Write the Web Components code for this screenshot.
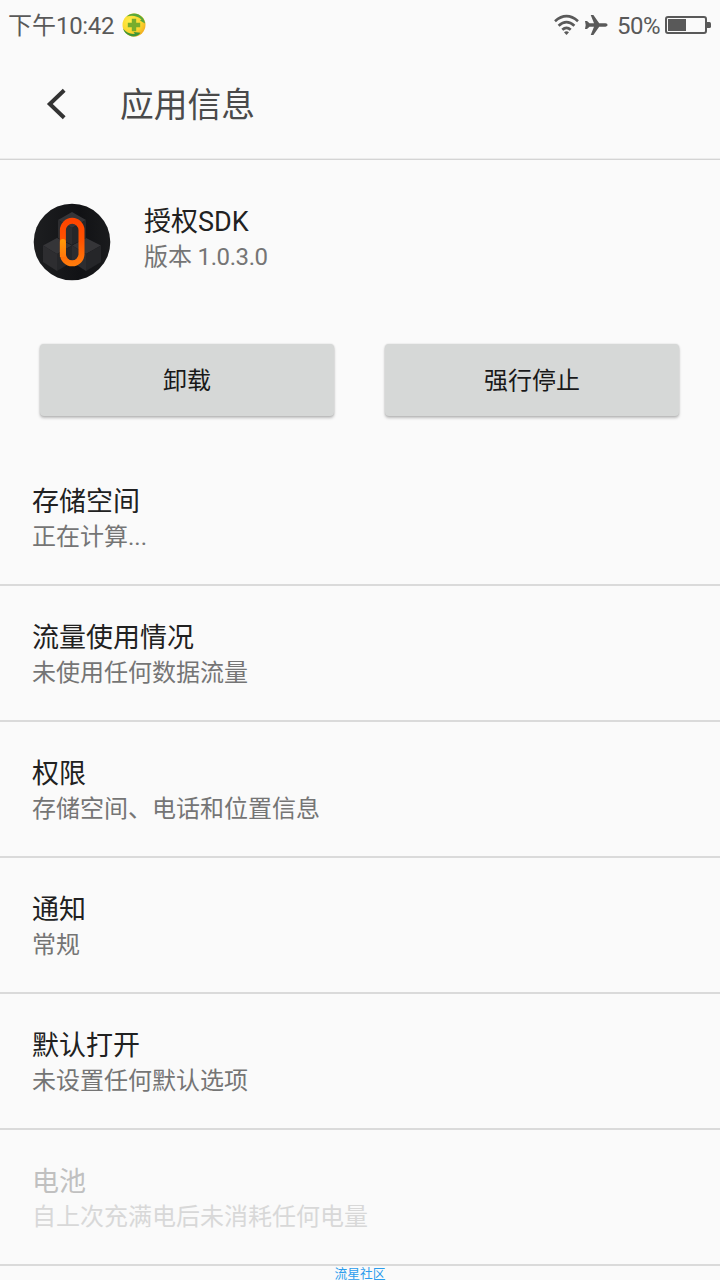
<!DOCTYPE html>
<html lang="zh-CN">
<head>
<meta charset="utf-8">
<title>应用信息</title>
<style>
html,body{margin:0;background:#fafafa}
body{width:720px;height:1280px;overflow:hidden;font-family:Roboto,"Noto Sans CJK SC",sans-serif;color:#212121}
</style>
</head>
<body>
<app-info-page></app-info-page>
<script>
const define = (name, html) => customElements.define(name, class extends HTMLElement {
  constructor() {
    super();
    const t = document.createElement('template');
    t.innerHTML = html;
    this.attachShadow({mode: 'open'}).append(t.content.cloneNode(true));
  }
});

define('status-bar', `
<style>
:host{display:flex;align-items:center;height:50px;box-sizing:border-box;padding:0 9px 0 8px;color:#595959;font-size:24px;line-height:50px}
svg{display:block;flex:none}
.time{width:107px;margin-right:6px;white-space:nowrap;padding-top:2px}
.time span{letter-spacing:-.35px}
.wifi{margin-left:auto}
.plane{margin-left:6px}
.pct{margin:0 6px 0 9px;padding-top:2px;width:42px;white-space:nowrap;letter-spacing:-.5px}
</style>
<span class="time">下午<span>10:42</span></span>
<svg width="26" height="26" viewBox="0 0 26 26">
  <defs><radialGradient id="g" cx=".35" cy=".35" r=".75"><stop offset="0" stop-color="#fff04a"/><stop offset=".65" stop-color="#fbd42b"/><stop offset="1" stop-color="#f0a820"/></radialGradient></defs>
  <circle cx="13" cy="13" r="11.500" fill="url(#g)"/>
  <path d="M5.500 4.500C9 1 14 .8 17 2.200C21 4 23.800 7.500 24 11.500L19 8.500 20.500 7.500C16 3.500 11 3 5.500 4.500Z" fill="#58a83c"/>
  <path d="M2 16.500C5 20.500 9.500 22.500 14 21.800L12.500 20 19.500 20.800C17 24.500 12.500 25 9 23.800C5.500 22.500 3 20 2 16.500Z" fill="#3f9638"/>
  <path d="M10.800 6.800h4.400v4h4v4.400h-4v4h-4.400v-4h-4v-4.400h4Z" fill="#76ad2d"/>
</svg>
<svg class="wifi" width="25" height="22" viewBox="0 0 25 22" fill="none" stroke="#595959" stroke-width="2.700">
  <path d="M1 7.200Q12.500-2.800 24 7.200M4.600 11.800Q12.500 4.600 20.400 11.800M8.300 15.800Q12.500 11.800 16.700 15.800"/>
  <path d="M10 18.200Q12.500 16.200 15 18.200L12.500 21Z" fill="#595959" stroke="none"/>
</svg>
<svg class="plane" width="23" height="22" viewBox="0 0 23 22">
  <path d="M0 6.900H2L4.500 9.300H9L5.700 1H8.400L14.200 9.300H20.500Q22.600 9.600 22.600 11Q22.600 12.400 20.500 12.700H14.200L8.400 21H5.700L9 12.700H4.500L2 15.100H0L.7 11Z" fill="#595959"/>
</svg>
<span class="pct">50%</span>
<svg width="46" height="18" viewBox="0 0 46 18">
  <rect x="1" y="1" width="40" height="16" rx="2" fill="none" stroke="#595959" stroke-width="2"/>
  <rect x="3" y="3" width="18" height="12" fill="#595959"/>
  <path d="M42 6h2.500q1.500 0 1.500 1.500v3q0 1.500-1.500 1.500H42Z" fill="#595959"/>
</svg>`);

define('title-bar', `
<style>
:host{display:flex;align-items:center;height:110px;box-sizing:border-box;border-bottom:1px solid #d4d4d4;box-shadow:inset 0 -1px #ececec;padding:0 0 1px 46px}
svg{display:block}
h1{margin:4px 0 0 53px;font-size:33.750px;font-weight:400;color:#4a4a4a;line-height:40px}
</style>
<svg width="21" height="32" viewBox="0 0 21 32"><path d="M18.200 2.300 3.800 16 18.200 29.700" fill="none" stroke="#333" stroke-width="4"/></svg>
<h1><slot></slot></h1>`);

define('text-pair', `
<style>
:host{display:block;font-size:27px;line-height:36px;color:#212121;white-space:nowrap}
.main{line-height:38px;height:36px}
.sub{font-size:24px;color:#757575}
:host([disabled]){color:#c0c0c0}
:host([disabled]) .sub{color:#d8d8d8}
</style>
<div class="main"><slot></slot></div><div class="sub"><slot name="sub"></slot></div>`);

define('app-header', `
<style>
:host{display:flex;height:184px;box-sizing:border-box;padding:43px 33px 0}
svg{display:block;flex:none}
text-pair{margin:0 0 0 33px}
</style>
<svg width="78" height="78" viewBox="0 0 78 78">
  <defs>
    <linearGradient id="b"><stop offset="0" stop-color="#1d1e20"/><stop offset=".6" stop-color="#111215"/><stop offset="1" stop-color="#1a1b1d"/></linearGradient>
    <linearGradient id="o" gradientUnits="userSpaceOnUse" x1="0" y1="15" x2="0" y2="63"><stop offset="0" stop-color="#ff4300"/><stop offset=".45" stop-color="#ff5200"/><stop offset="1" stop-color="#ff7d0c"/></linearGradient>
    <linearGradient id="y" gradientUnits="userSpaceOnUse" x1="0" y1="36" x2="0" y2="54"><stop offset="0" stop-color="#ff9b08"/><stop offset="1" stop-color="#ff780b"/></linearGradient>
  </defs>
  <circle cx="39" cy="39" r="38.300" fill="url(#b)"/>
  <path d="M39 9 53 17 39 25 25 17ZM24 35 39 42.500 24 51 10 42.500ZM53 35 68 42.500 53 51 39 42.500Z" fill="#353538"/>
  <path d="M25 17 39 25V42L25 35ZM10 42.500 24 51V68L10 59ZM39 42.500 53 51V68L39 59Z" fill="#2d2d30"/>
  <path d="M53 17 39 25V42L53 35ZM39 42.500 24 51V68L39 59ZM68 42.500 53 51V68L68 59Z" fill="#252629"/>
  <rect x="29.900" y="17.800" width="18.600" height="42.500" rx="9.300" fill="none" stroke="url(#o)" stroke-width="6"/>
  <path d="M26.900 54V39Q26.900 36 29.900 36T32.900 39V54Z" fill="url(#y)"/>
</svg>
<text-pair><slot></slot><slot name="sub" slot="sub"></slot></text-pair>`);

define('raised-button', `
<style>
:host{display:block;flex:1;height:72px;border-radius:4px;background:#d6d8d7;box-shadow:0 2px 3px rgba(0,0,0,.25),0 0 2px rgba(0,0,0,.14);text-align:center;font-size:24px;line-height:74px;color:#191919}
</style><slot></slot>`);

define('button-row', `
<style>:host{display:flex;gap:51px;height:106px;box-sizing:border-box;padding:0 41px 0 40px}</style><slot></slot>`);

define('setting-row', `
<style>
:host{display:block;height:136px;box-sizing:border-box;padding:33px 32px 0;border-bottom:2px solid #dadada}
</style><slot></slot>`);

define('page-credit', `
<style>:host{display:block;text-align:center;height:14px;line-height:16px;font-size:12.750px;color:#2b9ded}</style><slot></slot>`);

define('app-info-page', `
<style>:host{display:flex;flex-direction:column;width:720px;height:1280px;overflow:hidden;background:#fafafa}
:host>*,status-bar,title-bar,app-header,button-row,setting-row,page-credit{flex:none}
.num{letter-spacing:-.4px}</style>
<status-bar></status-bar>
<title-bar>应用信息</title-bar>
<app-header>授权SDK<span slot="sub">版本<span class="num"> 1.0.3.0</span></span></app-header>
<button-row><raised-button>卸载</raised-button><raised-button>强行停止</raised-button></button-row>
<setting-row><text-pair>存储空间<span slot="sub">正在计算...</span></text-pair></setting-row>
<setting-row><text-pair>流量使用情况<span slot="sub">未使用任何数据流量</span></text-pair></setting-row>
<setting-row><text-pair>权限<span slot="sub">存储空间、电话和位置信息</span></text-pair></setting-row>
<setting-row><text-pair>通知<span slot="sub">常规</span></text-pair></setting-row>
<setting-row><text-pair>默认打开<span slot="sub">未设置任何默认选项</span></text-pair></setting-row>
<setting-row><text-pair disabled>电池<span slot="sub">自上次充满电后未消耗任何电量</span></text-pair></setting-row>
<page-credit>流星社区</page-credit>`);
</script>
</body>
</html>
